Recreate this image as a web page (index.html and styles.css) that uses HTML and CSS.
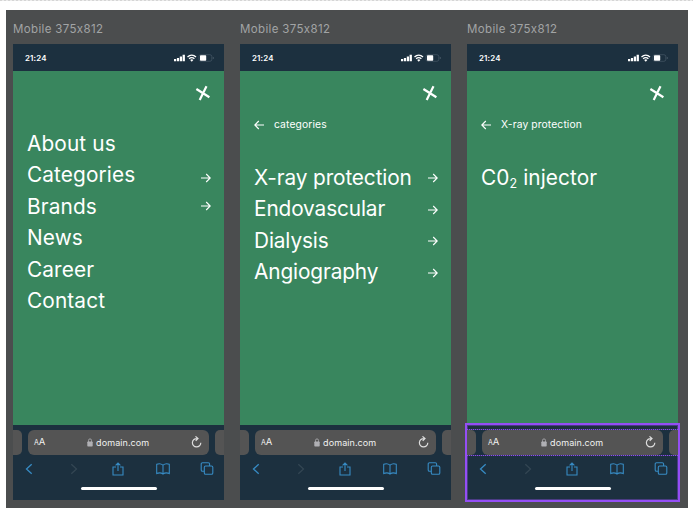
FILE: index.html
```
<!DOCTYPE html>
<html lang="en">
<head>
<meta charset="utf-8">
<title>Mobile navigation</title>
<link rel="stylesheet" href="styles.css">
</head>
<body>
<svg class="sprite" aria-hidden="true">
  <symbol id="status" viewBox="0 0 41 8">
    <path fill="#fff" d="M0 5.100h2.200v2.200H0zM2.900 4.100h2.200v3.200H2.900zM5.800 2.600H8v4.700H5.800zM8.600.8h2.300v6.500H8.600z"/>
    <path fill="none" stroke="#fff" stroke-width="1.350" d="M13.500 3c2.500-2.300 6-2.300 8.500 0M15.100 4.800c1.600-1.400 3.700-1.400 5.300 0"/>
    <path fill="#fff" d="M16.200 6q1.550-1.300 3.100 0l-1.550 1.700z"/>
    <rect x="25" y=".7" width="12.800" height="6.600" rx="1.900" fill="none" stroke="#4f606e" stroke-width=".6"/>
    <rect x="26" y="1.300" width="6.200" height="5.400" rx=".7" fill="#fff"/>
    <path d="M38.900 2.900q1.300 1.100 0 2.200" fill="none" stroke="#4f606e" stroke-width=".8"/>
  </symbol>
  <symbol id="close" viewBox="0 0 16 16"><path d="M1.400 4l13 8.300M11.500 1.200L4.700 15" fill="none" stroke="#fff" stroke-width="2.200"/></symbol>
  <symbol id="arrow" viewBox="0 0 10 10"><path d="M0 5h9M5.200 1l4 4-4 4" fill="none" stroke="#fff" stroke-width="1.100"/></symbol>
  <symbol id="lock" viewBox="0 0 6 9"><rect x=".3" y="3.600" width="5.400" height="4.800" rx=".7" fill="#b0b0b4"/><path d="M1.500 4V2.400a1.500 1.500 0 0 1 3 0V4" fill="none" stroke="#b0b0b4" stroke-width=".8"/></symbol>
  <symbol id="reload" viewBox="0 0 11 12"><path d="M9.800 6.700a4.200 4.200 0 1 1-3.700-4.100M4.500.4l2.500 2.200-2.300 2.300" fill="none" stroke="#dedede" stroke-width="1.200"/></symbol>
  <symbol id="back" viewBox="0 0 8 12"><path d="M6.700 1.200L1.500 6l5.200 4.800" fill="none" stroke="currentColor" stroke-width="1.300"/></symbol>
  <symbol id="share" viewBox="0 0 12 14"><path d="M4 5H1v8h10V5H8M6 9V1M3.600 3.300L6 1l2.400 2.300" fill="none" stroke="currentColor" stroke-width="1.100"/></symbol>
  <symbol id="book" viewBox="0 0 14 12"><path d="M7 2.200Q4.200-.3.700 1.300v9.300Q4.200 9 7 11q2.800-2 6.300-.4V1.300Q9.800-.3 7 2.200V11" fill="none" stroke="currentColor" stroke-width="1.050"/></symbol>
  <symbol id="tabs" viewBox="0 0 13 13"><rect x="3.800" y="4" width="8.500" height="8.200" rx="1.300" fill="none" stroke="currentColor" stroke-width="1.100"/><path d="M3.800 9.200H2A1.300 1.300 0 0 1 .7 7.900V2A1.300 1.300 0 0 1 2 .7h5.800A1.300 1.300 0 0 1 9.100 2v2" fill="none" stroke="currentColor" stroke-width="1.100"/></symbol>
</svg>
<div class="page-edge"></div>
<main class="board">
  <section class="frame">
    <h2 class="frame-title">Mobile 375x812</h2>
    <div class="phone">
      <div class="status"><span>21:24</span><svg class="status-icons"><use href="#status"/></svg></div>
      <div class="screen">
        <svg class="close"><use href="#close"/></svg>
        <ul class="menu root">
          <li><span>About us</span></li>
          <li><span>Categories</span><svg class="arrow"><use href="#arrow"/></svg></li>
          <li><span>Brands</span><svg class="arrow raised"><use href="#arrow"/></svg></li>
          <li><span>News</span></li>
          <li><span>Career</span></li>
          <li><span>Contact</span></li>
        </ul>
      </div>
      <div class="browser">
        <div class="tabs"><i class="peek left"></i><div class="address"><span class="aa"><small>A</small>A</span><span class="domain"><svg class="lock"><use href="#lock"/></svg>domain.com</span><svg class="reload"><use href="#reload"/></svg></div><i class="peek right"></i></div>
        <div class="tools"><svg class="back"><use href="#back"/></svg><svg class="back forward"><use href="#back"/></svg><svg class="share"><use href="#share"/></svg><svg class="book"><use href="#book"/></svg><svg class="tab-icon"><use href="#tabs"/></svg></div>
        <div class="home"></div>
      </div>
    </div>
  </section>
  <section class="frame">
    <h2 class="frame-title">Mobile 375x812</h2>
    <div class="phone">
      <div class="status"><span>21:24</span><svg class="status-icons"><use href="#status"/></svg></div>
      <div class="screen">
        <svg class="close"><use href="#close"/></svg>
        <div class="crumb"><svg class="arrow flip"><use href="#arrow"/></svg><span>categories</span></div>
        <ul class="menu sub">
          <li><span>X-ray protection</span><svg class="arrow"><use href="#arrow"/></svg></li>
          <li><span>Endovascular</span><svg class="arrow"><use href="#arrow"/></svg></li>
          <li><span>Dialysis</span><svg class="arrow"><use href="#arrow"/></svg></li>
          <li><span>Angiography</span><svg class="arrow"><use href="#arrow"/></svg></li>
        </ul>
      </div>
      <div class="browser">
        <div class="tabs"><i class="peek left"></i><div class="address"><span class="aa"><small>A</small>A</span><span class="domain"><svg class="lock"><use href="#lock"/></svg>domain.com</span><svg class="reload"><use href="#reload"/></svg></div><i class="peek right"></i></div>
        <div class="tools"><svg class="back"><use href="#back"/></svg><svg class="back forward"><use href="#back"/></svg><svg class="share"><use href="#share"/></svg><svg class="book"><use href="#book"/></svg><svg class="tab-icon"><use href="#tabs"/></svg></div>
        <div class="home"></div>
      </div>
    </div>
  </section>
  <section class="frame">
    <h2 class="frame-title">Mobile 375x812</h2>
    <div class="phone">
      <div class="status"><span>21:24</span><svg class="status-icons"><use href="#status"/></svg></div>
      <div class="screen">
        <svg class="close"><use href="#close"/></svg>
        <div class="crumb"><svg class="arrow flip"><use href="#arrow"/></svg><span>X-ray protection</span></div>
        <ul class="menu sub product">
          <li><span>C0<sub>2</sub> injector</span></li>
        </ul>
      </div>
      <div class="browser selected">
        <div class="tabs"><i class="peek left"></i><div class="address"><span class="aa"><small>A</small>A</span><span class="domain"><svg class="lock"><use href="#lock"/></svg>domain.com</span><svg class="reload"><use href="#reload"/></svg></div><i class="peek right"></i></div>
        <div class="tools"><svg class="back"><use href="#back"/></svg><svg class="back forward"><use href="#back"/></svg><svg class="share"><use href="#share"/></svg><svg class="book"><use href="#book"/></svg><svg class="tab-icon"><use href="#tabs"/></svg></div>
        <div class="home"></div>
      </div>
    </div>
  </section>
</main>
</body>
</html>
```
FILE: styles.css
```
* { box-sizing: border-box; }
body { margin: 0; height: 516px; overflow: hidden; background: #fff; font-family: Inter, "Liberation Sans", sans-serif; }
svg { display: block; flex: none; }
.sprite { display: none; }
.page-edge { height: 1px; margin-bottom: 9px; background: repeating-linear-gradient(90deg, #d5d5d5 0 2px, #ececec 2px 4px); }
.board { width: 682px; height: 498px; margin-left: 6px; padding: 0 10px 8px 7px; background: #4b4d4e; display: flex; gap: 16px; }
.frame { width: 211px; }
.frame-title { margin: 0; height: 34px; padding-top: 12px; font: 400 11.500px/14px Inter, sans-serif; letter-spacing: .35px; color: #a2a4a5; white-space: nowrap; }
.phone { height: 456px; display: flex; flex-direction: column; }
.status { height: 27px; padding: 0 9px 0 12px; background: #1c303f; color: #fff; display: flex; align-items: center; justify-content: space-between; font: 600 7.900px/10px Inter, sans-serif; letter-spacing: .15px; }
.status-icons { width: 41px; height: 8px; }
.screen { height: 354px; padding: 14px 13px 0 14px; background: #39865e; color: #fff; display: flex; flex-direction: column; }
.close { width: 16px; height: 16px; align-self: flex-end; }
.menu { list-style: none; margin: 0; padding: 0; }
.menu li { height: 31.400px; display: flex; align-items: center; justify-content: space-between; font-size: 20.800px; line-height: 31.400px; letter-spacing: -.12px; white-space: nowrap; }
.menu.root { margin-top: 27px; }
.menu.root li { letter-spacing: .12px; }
.menu.sub { margin-top: 30px; }
.menu.product li { letter-spacing: .1px; }
.arrow { width: 10px; height: 10px; margin-top: 5px; }
.arrow.raised { margin-top: 0; }
.sub .arrow { margin-top: 1px; }
.sub li:nth-child(n + 3) .arrow { margin-top: 2px; }
.sub li:nth-child(4) .arrow { margin-top: 3px; }
.crumb .flip { margin: 0; transform: scaleX(-1); }
.crumb { height: 14px; margin-top: 17px; display: flex; align-items: center; gap: 10px; font-size: 10.300px; line-height: 12px; letter-spacing: .12px; white-space: nowrap; }
.crumb span { margin-top: -2px; }
.menu sub { font-size: 12.500px; line-height: 0; vertical-align: -3px; }
.browser { height: 75px; padding-top: 5px; background: #1c303f; }
.tabs { height: 25px; display: flex; justify-content: space-between; }
.peek { width: 9px; background: #545454; }
.peek.left { border-radius: 0 5px 5px 0; }
.peek.right { border-radius: 5px 0 0 5px; }
.address { width: 181px; padding: 0 7px 0 6px; border-radius: 6px; background: #545454; color: #f0f0f0; display: flex; align-items: center; justify-content: space-between; }
.aa { font-size: 9.500px; line-height: 12px; margin-top: -1px; }
.aa small { font-size: 7px; }
.domain { display: flex; align-items: center; gap: 3px; margin-top: 0; font-size: 9px; line-height: 12px; letter-spacing: .08px; }
.lock { width: 6px; height: 9px; }
.reload { width: 11px; height: 12px; margin-top: -2px; }
.tools { height: 28px; padding: 0 10px 1px 9px; color: #378bc4; display: flex; align-items: center; justify-content: space-between; }
.tools svg { width: 14px; }
.back { height: 12px; }
.forward { transform: scaleX(-1); color: #334653; }
.share { height: 14px; }
.book { height: 12px; }
.tab-icon { height: 13px; }
.home { width: 76px; height: 3px; margin: 4px auto 0 68px; border-radius: 2px; background: #fff; }
.selected { display: flow-root; outline: 2px solid #944ef5; box-shadow: inset 0 0 0 1px #4b3c85; }
.selected .tabs { height: 27px; margin: -1px 0; padding: 1px 0; background: repeating-linear-gradient(90deg, #8a50e8 0 1px, #3a3470 1px 2px) top / 100% 1px no-repeat, repeating-linear-gradient(90deg, #8a50e8 0 1px, #3a3470 1px 2px) bottom / 100% 1px no-repeat; }
```
